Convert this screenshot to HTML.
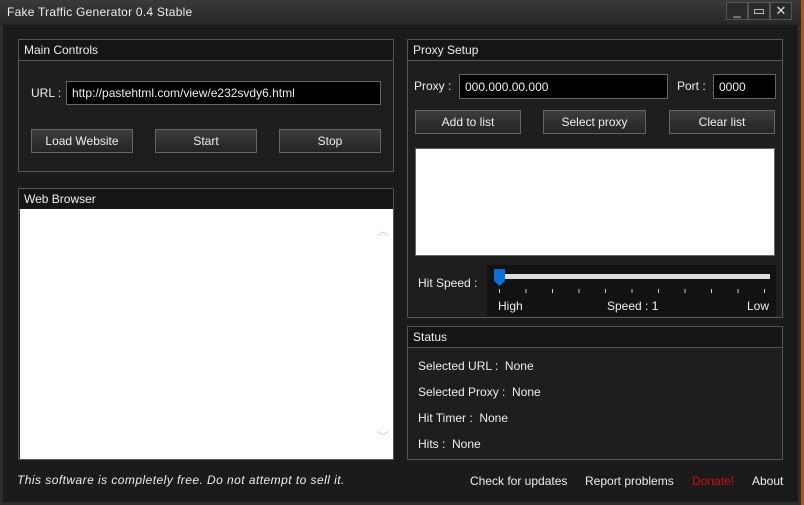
<html><head><style>
body{margin:0;width:804px;height:505px;background:#1b1b1b;font-family:"Liberation Sans","DejaVu Sans",sans-serif;font-size:12px;color:#eee;position:relative;overflow:hidden}
div{position:absolute;box-sizing:border-box}
.tb{left:0;top:0;width:801px;height:25px;background:linear-gradient(#3a3a3a,#262626);}
.panel{border:1px solid #555;background:#1e1e1e}
.ph{left:0;top:0;right:0;height:21px;border-bottom:1px solid #555;background:#151515;padding:3px 5px;font-size:12px}
.btn{height:24px;border:1px solid #666;background:linear-gradient(#3d3d3d,#242424);text-align:center;line-height:22px;font-size:12px}
.inp{background:#000;border:1px solid #666;padding:4px 5px;font-size:12px}
.t{white-space:nowrap}
.wb{top:2px;width:22px;height:18px;border:1px solid #555;background:#2a2a2a;color:#ddd;text-align:center;font-size:13px;line-height:16px}
</style></head><body>
<div style="left:801px;top:0;width:3px;height:505px;background:#b8501a"></div>
<div class="tb"><div class="t" style="left:7px;top:5px;font-size:12px;letter-spacing:0.25px">Fake Traffic Generator 0.4 Stable</div>
<div class="wb" style="left:726px">_</div><div class="wb" style="left:748px">▭</div><div class="wb" style="left:770px">✕</div></div>
<div style="left:0;top:25px;width:801px;height:480px;border:3px solid #2e2e2e;border-top:none;background:#1b1b1b"></div>

<div class="panel" style="left:18px;top:39px;width:376px;height:133px"><div class="ph">Main Controls</div></div>
<div class="t" style="left:31px;top:86px">URL :</div>
<div class="inp" style="left:66px;top:81px;width:315px;height:24px">http://pastehtml.com/view/e232svdy6.html</div>
<div class="btn" style="left:31px;top:129px;width:102px">Load Website</div>
<div class="btn" style="left:155px;top:129px;width:102px">Start</div>
<div class="btn" style="left:279px;top:129px;width:102px">Stop</div>

<div class="panel" style="left:18px;top:188px;width:376px;height:272px"><div class="ph">Web Browser</div></div>
<div style="left:20px;top:209px;width:373px;height:250px;background:#fff"></div>
<div class="t" style="left:377px;top:222px;color:#ccc;font-size:12px">︿</div>
<div class="t" style="left:377px;top:428px;color:#ccc;font-size:12px">﹀</div>

<div class="panel" style="left:407px;top:39px;width:376px;height:279px"><div class="ph">Proxy Setup</div></div>
<div class="t" style="left:414px;top:79px">Proxy :</div>
<div class="inp" style="left:459px;top:74px;width:209px;height:25px;padding-top:5px">000.000.00.000</div>
<div class="t" style="left:677px;top:79px">Port :</div>
<div class="inp" style="left:713px;top:74px;width:63px;height:25px;padding-top:5px">0000</div>
<div class="btn" style="left:415px;top:110px;width:106px">Add to list</div>
<div class="btn" style="left:543px;top:110px;width:103px">Select proxy</div>
<div class="btn" style="left:669px;top:110px;width:106px">Clear list</div>
<div style="left:415px;top:148px;width:360px;height:108px;background:#fff;border:1px solid #666"></div>
<div class="t" style="left:418px;top:276px">Hit Speed :</div>
<div style="left:487px;top:265px;width:289px;height:51px;background:#121212"></div>
<div style="left:500px;top:274px;width:270px;height:5px;background:#ddd"></div>
<div style="left:494px;top:269px;width:11px;height:17px;background:#0a6fd8;clip-path:polygon(0 0,100% 0,100% 70%,50% 100%,0 70%)"></div>
<div style="left:499px;top:289px;width:275px;height:4px;background:repeating-linear-gradient(90deg,#ccc 0 1px,transparent 1px 26.5px)"></div>
<div class="t" style="left:498px;top:299px">High</div>
<div class="t" style="left:607px;top:299px">Speed : 1</div>
<div class="t" style="left:747px;top:299px">Low</div>

<div class="panel" style="left:407px;top:326px;width:376px;height:134px"><div class="ph">Status</div></div>
<div class="t" style="left:418px;top:359px">Selected URL :&nbsp; None</div>
<div class="t" style="left:418px;top:385px">Selected Proxy :&nbsp; None</div>
<div class="t" style="left:418px;top:411px">Hit Timer :&nbsp; None</div>
<div class="t" style="left:418px;top:437px">Hits :&nbsp; None</div>

<div class="t" style="left:17px;top:473px;font-style:italic;letter-spacing:0.45px">This software is completely free. Do not attempt to sell it.</div>
<div class="t" style="left:470px;top:474px">Check for updates</div>
<div class="t" style="left:585px;top:474px">Report problems</div>
<div class="t" style="left:692px;top:474px;color:#d01010">Donate!</div>
<div class="t" style="left:752px;top:474px">About</div>
</body></html>
